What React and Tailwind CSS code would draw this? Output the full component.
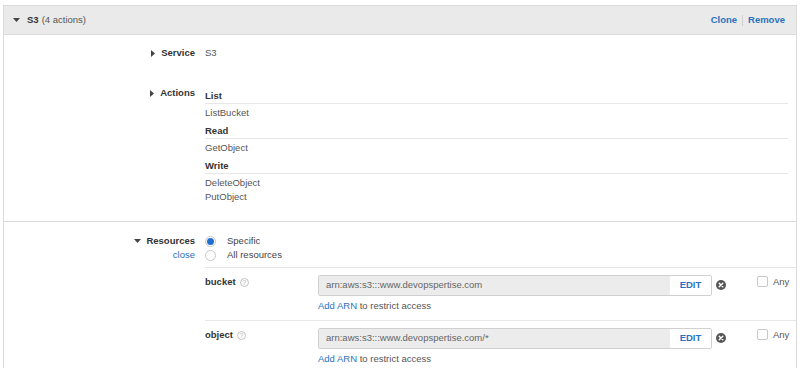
import React from "react";

const Right = () => (
  <svg width="4" height="7" viewBox="0 0 4 7" className="shrink-0">
    <polygon points="0,0 4,3.5 0,7" fill="#444" />
  </svg>
);
const Down = () => (
  <svg width="7" height="4" viewBox="0 0 7 4" className="shrink-0">
    <polygon points="0,0 7,0 3.5,4" fill="#444" />
  </svg>
);

const Help = () => (
  <span className="ml-[4px] inline-flex h-[9px] w-[9px] items-center justify-center rounded-full border border-[#c4c4c4] text-[7px] leading-none text-[#b5b5b5]">
    ?
  </span>
);

const XIcon = () => (
  <svg width="10" height="10" viewBox="0 0 10 10" className="shrink-0">
    <circle cx="5" cy="5" r="5" fill="#555" />
    <path d="M3.2 3.2 L6.8 6.8 M6.8 3.2 L3.2 6.8" stroke="#fff" strokeWidth="1.4" strokeLinecap="round" />
  </svg>
);

function Group({ title, items }) {
  return (
    <div className="mb-[4px]">
      <div className="h-[15px] border-b border-[#e6e6e6] font-bold leading-[14px] text-[#333]">{title}</div>
      <div className="pt-[2px]">
        {items.map((i) => (
          <div key={i} className="leading-[14px] text-[#555]">
            {i}
          </div>
        ))}
      </div>
    </div>
  );
}

function ResRow({ name, arn }) {
  return (
    <div className="flex items-start border-t border-[#e6e6e6] pt-[7px] pb-[7px]">
      <div className="flex w-[113px] items-center leading-[14px]">
        <span className="font-bold text-[#333]">{name}</span>
        <Help />
      </div>
      <div className="w-[394px]">
        <div className="flex h-[21px] overflow-hidden rounded-[2px] border border-[#d0d0d0]">
          <div className="flex flex-1 items-center bg-[#ececec] px-[7px] text-[#666]">{arn}</div>
          <div className="flex w-[41px] items-center justify-center bg-white font-bold text-[#2a72c0]">EDIT</div>
        </div>
        <div className="mt-[3px] leading-[14px] text-[#555]">
          <span className="text-[#2a72c0]">Add ARN</span> to restrict access
        </div>
      </div>
      <div className="ml-[4px] mt-[5px]">
        <XIcon />
      </div>
      <div className="ml-[31px] mt-[1px] h-[11px] w-[11px] rounded-[2px] border border-[#c8c8c8] bg-white" />
      <div className="ml-[5px] leading-[14px] text-[#555]">Any</div>
    </div>
  );
}

export default function App() {
  return (
    <div className="h-[368px] w-[800px] overflow-hidden bg-white px-[3px] pt-[5px] font-['Liberation_Sans',Arial,sans-serif] text-[9.5px]">
      <div className="h-full border border-b-0 border-[#dadada]">
        <div className="flex h-[29px] items-center border-b border-[#dadada] bg-[#eaeaea] pl-[9px] pr-[11px]">
          <Down />
          <span className="ml-[7px] font-bold text-[#333]">S3</span>
          <span className="ml-[3px] text-[#555]">(4 actions)</span>
          <div className="ml-auto flex items-center font-bold text-[#2a72c0]">
            <span>Clone</span>
            <span className="mx-[5px] h-[11px] w-px bg-[#cfcfcf]" />
            <span>Remove</span>
          </div>
        </div>

        <div className="grid grid-cols-[191px_1fr] gap-x-[10px] pt-[11px]">
          <div className="flex items-center justify-end leading-[14px]">
            <Right />
            <span className="ml-[6px] font-bold text-[#333]">Service</span>
          </div>
          <div className="leading-[14px] text-[#555]">S3</div>
        </div>

        <div className="mt-[26px] grid grid-cols-[191px_1fr] gap-x-[10px] pb-[13px]">
          <div className="flex h-[14px] items-center justify-end leading-[14px]">
            <Right />
            <span className="ml-[6px] font-bold text-[#333]">Actions</span>
          </div>
          <div className="pt-[3px] pr-[8px]">
            <Group title="List" items={["ListBucket"]} />
            <Group title="Read" items={["GetObject"]} />
            <Group title="Write" items={["DeleteObject", "PutObject"]} />
          </div>
        </div>

        <div className="grid grid-cols-[191px_1fr] gap-x-[10px] border-t border-[#dadada] pt-[12px]">
          <div className="flex flex-col items-end leading-[14px]">
            <div className="flex items-center">
              <Down />
              <span className="ml-[5px] font-bold text-[#333]">Resources</span>
            </div>
            <span className="text-[#2a72c0]">close</span>
          </div>
          <div>
            <div className="flex h-[14px] items-center">
              <span className="flex h-[11px] w-[11px] items-center justify-center rounded-full border border-[#c8c8c8] bg-white">
                <span className="h-[7px] w-[7px] rounded-full bg-[#1f6fd0]" />
              </span>
              <span className="ml-[11px] text-[#444]">Specific</span>
            </div>
            <div className="flex h-[14px] items-center">
              <span className="h-[11px] w-[11px] rounded-full border border-[#c8c8c8] bg-white" />
              <span className="ml-[11px] text-[#444]">All resources</span>
            </div>
            <div className="mt-[5px]">
              <ResRow name="bucket" arn="arn:aws:s3:::www.devopspertise.com" />
              <ResRow name="object" arn="arn:aws:s3:::www.devopspertise.com/*" />
            </div>
          </div>
        </div>
      </div>
    </div>
  );
}
